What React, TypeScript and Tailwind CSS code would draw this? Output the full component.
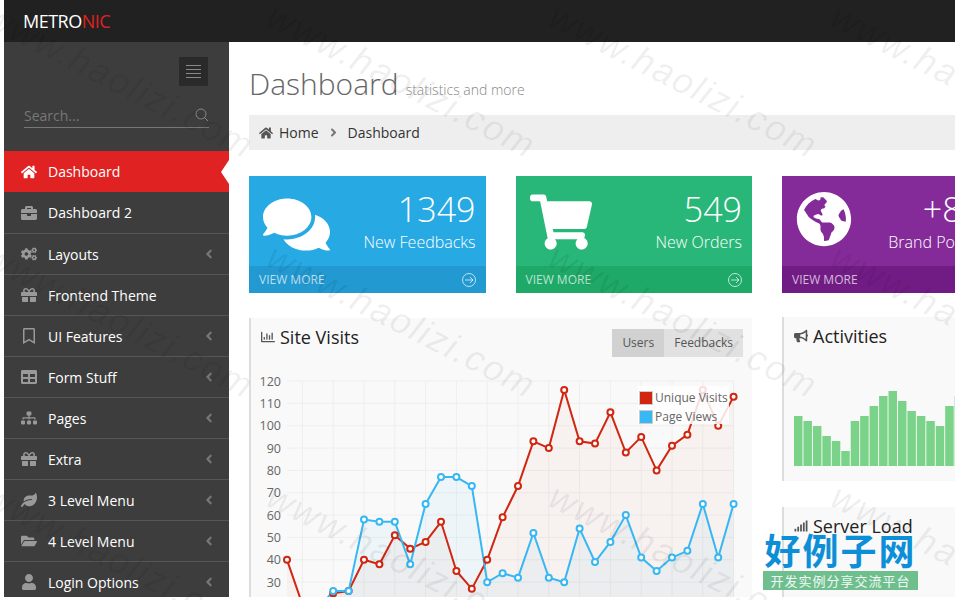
import React from "react";
import {
  FaHome,
  FaBriefcase,
  FaCogs,
  FaGift,
  FaRegBookmark,
  FaTable,
  FaSitemap,
  FaLeaf,
  FaFolderOpen,
  FaUser,
  FaAngleLeft,
  FaAngleRight,
  FaComments,
  FaShoppingCart,
  FaGlobeAmericas,
  FaRegChartBar,
  FaBullhorn,
  FaSignal,
} from "react-icons/fa";

const menu = [
  { label: "Dashboard", icon: FaHome, active: true },
  { label: "Dashboard 2", icon: FaBriefcase },
  { label: "Layouts", icon: FaCogs, more: true },
  { label: "Frontend Theme", icon: FaGift },
  { label: "UI Features", icon: FaRegBookmark, more: true },
  { label: "Form Stuff", icon: FaTable, more: true },
  { label: "Pages", icon: FaSitemap, more: true },
  { label: "Extra", icon: FaGift, more: true },
  { label: "3 Level Menu", icon: FaLeaf, more: true },
  { label: "4 Level Menu", icon: FaFolderOpen, more: true },
  { label: "Login Options", icon: FaUser, more: true },
];

const red = [40, 20, 10, 25, 26, 40, 38, 51, 45, 48, 57, 35, 27, 40, 59, 73, 93, 90, 116, 93, 92, 106, 88, 95, 80, 91, 96, 116, 100, 113];
const blue = [15, 10, 18, 26, 26, 58, 57, 57, 38, 65, 77, 77, 73, 30, 34, 32, 52, 32, 30, 54, 39, 48, 60, 41, 35, 41, 44, 65, 41, 65];
const bars = [50, 45, 40, 30, 25, 15, 45, 50, 60, 70, 75, 65, 55, 50, 45, 40, 60, 70];
const ticks = [120, 110, 100, 90, 80, 70, 60, 50, 40, 30, 20];

const px = (i: number) => 287 + i * 15.4;
const py = (v: number) => 382 + (120 - v) * 2.235;
const line = (d: number[]) => d.map((v, i) => `${px(i)},${py(v)}`).join(" ");
const area = (d: number[]) => `${px(0)},640 ${line(d)} ${px(29)},640`;

function StatCard({ bg, foot, value, label, icon }: { bg: string; foot: string; value: string; label: string; icon: React.ReactNode }) {
  return (
    <div className={`${bg} text-white`}>
      <div className="h-[90px] flex justify-between pl-[14px] pr-[10px]">
        <div className="pt-[15px]">{icon}</div>
        <div className="text-right pt-[12px]">
          <div className="text-[34px] leading-[42px] font-light">{value}</div>
          <div className="text-[16px] leading-[22px] mt-[1px] font-light">{label}</div>
        </div>
      </div>
      <div className={`${foot} h-[27px] flex items-center justify-between pl-[10px] pr-[10px] text-[12px] text-white/70`}>
        <span>VIEW MORE</span>
        <svg width="14" height="14" viewBox="0 0 14 14" fill="none" stroke="currentColor" strokeWidth="1">
          <circle cx="7" cy="7" r="6.5" />
          <path d="M3 7h8M8 4l3 3-3 3" />
        </svg>
      </div>
    </div>
  );
}

function Chart() {
  return (
    <svg width="503" height="226" viewBox="249 372 503 226" className="block">
      {ticks.map((t) => (
        <g key={t}>
          <line x1="287" x2="734" y1={py(t)} y2={py(t)} stroke="#eeeeee" />
          <text x="281" y={py(t) + 4.5} textAnchor="end" fontSize="12.5" fill="#666666">
            {t}
          </text>
        </g>
      ))}
      {Array.from({ length: 15 }).map((_, i) => (
        <line key={i} x1={287 + i * 30.8 + 15.4} x2={287 + i * 30.8 + 15.4} y1="382" y2="640" stroke="#eeeeee" />
      ))}
      <polygon points={area(red)} fill="#cb2a10" fillOpacity="0.04" />
      <polygon points={area(blue)} fill="#37b7f3" fillOpacity="0.06" />
      <polyline points={line(red)} fill="none" stroke="#d12610" strokeWidth="2" />
      <polyline points={line(blue)} fill="none" stroke="#37b7f3" strokeWidth="2" />
      {red.map((v, i) => (
        <circle key={i} cx={px(i)} cy={py(v)} r="3" fill="#ffffff" stroke="#d12610" strokeWidth="2" />
      ))}
      {blue.map((v, i) => (
        <circle key={i} cx={px(i)} cy={py(v)} r="3" fill="#ffffff" stroke="#37b7f3" strokeWidth="2" />
      ))}
    </svg>
  );
}

const marks = [
  [0, -50], [282, -50], [564, -50], [846, -50],
  [0, 190], [282, 190], [564, 190], [846, 190],
  [0, 430], [282, 430], [564, 430], [846, 430],
];

export default function App() {
  return (
    <div className="relative h-[600px] overflow-hidden bg-white pl-1 font-['Open_Sans',sans-serif]">
      <div className="h-[597px] flex flex-col overflow-hidden">
        {/* top bar */}
        <header className="h-[42px] shrink-0 bg-[#212121] flex items-center pl-[19px] text-[18px] tracking-[-0.5px]">
          <span className="text-white">METRO</span>
          <span className="text-[#e02222]">NIC</span>
        </header>

        <div className="flex-1 flex min-h-0">
          {/* sidebar */}
          <aside className="w-[225px] shrink-0 bg-[#3d3d3d]">
            <div className="h-[109px] relative">
              <div className="flex justify-end pt-[15px] pr-[21px]">
                <div className="w-[29px] h-[29px] bg-[#2a2a2a] flex flex-col items-center justify-center gap-[3px]">
                  <i className="block w-[15px] h-px bg-[#888]" />
                  <i className="block w-[15px] h-px bg-[#888]" />
                  <i className="block w-[15px] h-px bg-[#888]" />
                  <i className="block w-[15px] h-px bg-[#888]" />
                </div>
              </div>
              <div className="mx-[20px] mt-[17px] h-[25px] border-b border-[#777] flex items-center justify-between text-[14px] text-[#777]">
                <span>Search...</span>
                <svg width="14" height="14" viewBox="0 0 14 14" fill="none" stroke="#888" strokeWidth="1">
                  <circle cx="6" cy="6" r="5" />
                  <path d="M9.5 9.5L13 13" />
                </svg>
              </div>
            </div>
            {menu.map((m, i) => (
              <div
                key={m.label}
                className={`relative h-[41px] flex items-center text-[14px] text-white ${m.active ? "bg-[#e02222]" : ""} ${i > 1 ? "border-t border-[#565656]" : ""}`}
              >
                <m.icon className={`absolute left-[17px] ${m.active ? "text-white" : "text-[#999]"} text-[16px]`} />
                <span className="pl-[44px]">{m.label}</span>
                {m.more && <FaAngleLeft className="absolute left-[198px] text-[#777] text-[14px]" />}
                {m.active && <i className="absolute right-0 top-[9px] border-y-[12px] border-r-[8px] border-y-transparent border-r-white" />}
              </div>
            ))}
          </aside>

          {/* main */}
          <main className="flex-1 min-w-0 overflow-hidden pl-[20px]">
            <div className="w-[1036px]">
              <div className="h-[73px] pt-[21px] flex items-baseline text-[#666]">
                <h1 className="text-[30px] leading-[42px] font-light">Dashboard</h1>
                <span className="ml-[7px] text-[14px] font-light text-[#888]">statistics and more</span>
              </div>
              <div className="h-[35px] bg-[#eeeeee] flex items-center pl-[10px] text-[14px] text-[#333]">
                <FaHome className="text-[#555] mr-[6px] text-[14px]" />
                <span>Home</span>
                <FaAngleRight className="mx-[8px] text-[#777] text-[13px]" />
                <span>Dashboard</span>
              </div>

              <div className="mt-[26px] grid grid-cols-[repeat(4,236.5px)] gap-[30px]">
                <StatCard bg="bg-[#27a9e3]" foot="bg-[#2299d0]" value="1349" label="New Feedbacks" icon={<FaComments className="text-white text-[67px]" />} />
                <StatCard bg="bg-[#28b779]" foot="bg-[#1ea968]" value="549" label="New Orders" icon={<FaShoppingCart className="text-white text-[62px]" />} />
                <StatCard bg="bg-[#852b99]" foot="bg-[#701c84]" value="+89%" label="Brand Popularity" icon={<FaGlobeAmericas className="text-white text-[56px]" />} />
                <StatCard bg="bg-[#ffb848]" foot="bg-[#e0a03c]" value="689" label="Total Profit" icon={<FaBriefcase className="text-white text-[56px]" />} />
              </div>

              <div className="mt-[25px] flex gap-[30px] items-start">
                {/* site visits */}
                <section className="relative w-[503px] shrink-0 h-[290px] bg-[#f9f9f9] border-l-2 border-[#dddddd]">
                  <div className="flex items-start justify-between pl-[10px] pr-[9px] pt-[7px] h-[53px]">
                    <div className="flex items-center text-[18px] leading-[24px] text-[#222]">
                      <FaRegChartBar className="text-[#555] text-[14px] mr-[5px]" />
                      Site Visits
                    </div>
                    <div className="flex mt-[4px] text-[12px] text-[#555]">
                      <span className="h-[28px] px-[10px] leading-[28px] bg-[#d1d1d1]">Users</span>
                      <span className="h-[28px] px-[10px] leading-[28px] bg-[#e1e1e1]">Feedbacks</span>
                    </div>
                  </div>
                  <div className="-ml-[2px]">
                    <Chart />
                  </div>
                  <div className="absolute left-[387px] top-[68px] w-[91px] h-[38px] bg-white/85 text-[12px] text-[#666] pl-[2px] pt-[2px] leading-[19px]">
                    <div className="flex items-center gap-[3px]">
                      <i className="block w-[12px] h-[12px] bg-[#d12610] ring-1 ring-[#ccc]" />
                      Unique Visits
                    </div>
                    <div className="flex items-center gap-[3px]">
                      <i className="block w-[12px] h-[12px] bg-[#37b7f3] ring-1 ring-[#ccc]" />
                      Page Views
                    </div>
                  </div>
                </section>

                {/* right column */}
                <div className="w-[503px] shrink-0">
                  <section className="h-[164px] bg-[#f9f9f9] border-l-2 border-[#dddddd] -mt-px">
                    <div className="flex items-center pl-[10px] pt-[7px] text-[18px] leading-[24px] text-[#222]">
                      <FaBullhorn className="text-[#555] text-[14px] mr-[5px]" />
                      Activities
                    </div>
                    <svg width="300" height="75" viewBox="0 0 300 75" className="block ml-[10px] mt-[43px]">
                      {bars.map((h, i) => (
                        <rect key={i} x={i * 9.45} y={75 - h} width="8.5" height={h} fill="#7bd389" />
                      ))}
                    </svg>
                  </section>
                  <section className="mt-[26px] h-[100px] bg-[#f9f9f9] border-l-2 border-[#dddddd]">
                    <div className="flex items-center pl-[10px] pt-[7px] text-[18px] leading-[24px] text-[#222]">
                      <FaSignal className="text-[#555] text-[14px] mr-[5px]" />
                      Server Load
                    </div>
                  </section>
                </div>
              </div>
            </div>
          </main>
        </div>
      </div>

      {/* watermark */}
      <div className="absolute inset-0 pointer-events-none overflow-hidden">
        {marks.map(([x, y]) => (
          <span
            key={`${x}-${y}`}
            style={{ left: x, top: y + 40 }}
            className="absolute block origin-top-left rotate-[27deg] whitespace-nowrap text-[36px] tracking-[2px] text-black/[0.07] font-['Liberation_Sans',sans-serif] italic"
          >
            www.haolizi.com
          </span>
        ))}
      </div>

      {/* site stamp, lower right */}
      <div className="absolute left-[763px] top-[528px] w-[155px] pointer-events-none text-center">
        <div className="text-[36px] leading-[43px] font-bold tracking-[2px] text-[#0d8fd8] font-['Noto_Sans_CJK_SC',serif]">好例子网</div>
        <div className="h-[19px] bg-[#6fbf8e] text-[13px] leading-[19px] tracking-[1px] text-white/90 font-['Noto_Sans_CJK_SC',sans-serif]">开发实例分享交流平台</div>
      </div>
    </div>
  );
}
